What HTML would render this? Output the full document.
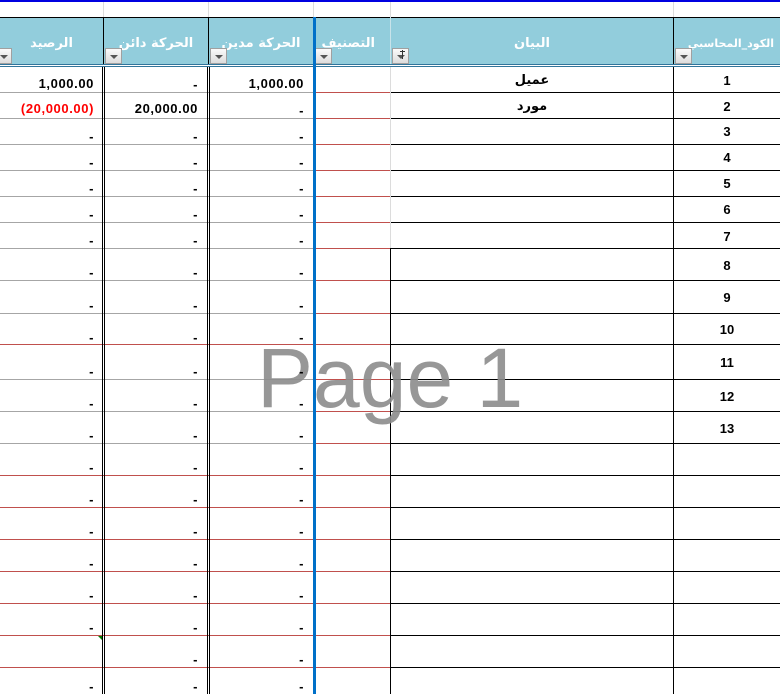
<!DOCTYPE html>
<html><head><meta charset="utf-8">
<style>
*{margin:0;padding:0;box-sizing:border-box}
body{width:780px;height:694px;overflow:hidden;background:#fff;position:relative;font-family:"Liberation Sans","DejaVu Sans",sans-serif}
.a{position:absolute}
.h{position:absolute;height:1px}
.v{position:absolute;width:1px}
.t{position:absolute;font-weight:bold;font-size:13px;line-height:16px;height:16px;color:#000;white-space:nowrap;letter-spacing:0.6px}
.c0{right:686px}.c1{right:582px}.c2{right:476px}
.hd{position:absolute;top:34px;color:#fff;font-weight:bold;font-size:13px;font-family:"DejaVu Sans",sans-serif;text-align:center;line-height:20px;white-space:nowrap}
.fb{position:absolute;top:48px;width:17px;height:16px;border:1px solid #a0a0a0;background:linear-gradient(#fafafa,#dcdcdc)}
.fb:after{content:"";position:absolute;left:4px;top:6px;border-left:4px solid transparent;border-right:4px solid transparent;border-top:4px solid #555}
.ar{font-family:"DejaVu Sans",sans-serif;letter-spacing:0}
.d .t{margin-top:3px}
.cd{position:absolute;font-weight:bold;font-size:13px;line-height:16px;left:674px;width:106px;text-align:center;margin-top:1px}
</style></head><body>
<div class="h" style="top:0;left:0;width:780px;height:2px;background:#0000e0"></div>
<div class="v" style="left:103px;top:2px;height:15px;background:#dcdcdc"></div>
<div class="v" style="left:208px;top:2px;height:15px;background:#dcdcdc"></div>
<div class="v" style="left:313px;top:2px;height:15px;background:#dcdcdc"></div>
<div class="v" style="left:390px;top:2px;height:15px;background:#dcdcdc"></div>
<div class="v" style="left:673px;top:2px;height:15px;background:#dcdcdc"></div>
<div class="a" style="left:0;top:17px;width:780px;height:48px;background:#92cddc;border-top:1px solid #000"></div>
<div class="v" style="left:103px;top:17px;height:48px;background:#000"></div>
<div class="v" style="left:208px;top:17px;height:48px;background:#000"></div>
<div class="v" style="left:390px;top:17px;height:48px;background:#c8e3ea"></div>
<div class="v" style="left:673px;top:17px;height:48px;background:#000"></div>
<div class="h" style="left:0;top:64px;width:780px;background:#31759b"></div>
<div class="h" style="left:0;top:66px;width:780px;background:#31759b"></div>
<div class="hd" style="left:0;width:103px">الرصيد</div>
<div class="hd" style="left:104px;width:104px">الحركة دائن</div>
<div class="hd" style="left:209px;width:104px">الحركة مدين</div>
<div class="hd" style="left:316px;width:74px;text-align:right;padding-right:15px">التصنيف</div>
<div class="hd" style="left:391px;width:282px">البيان</div>
<div class="hd" style="left:676px;width:98px;font-size:11px;text-align:right">الكود_المحاسبي</div>
<div class="fb" style="left:-5px"></div>
<div class="fb" style="left:105px"></div>
<div class="fb" style="left:210px"></div>
<div class="fb" style="left:315px"></div>
<div class="fb" style="left:392px"></div>
<div class="a" style="left:402px;top:50px;width:1px;height:9px;background:#333"></div>
<div class="a" style="left:400px;top:51px;width:5px;height:1px;background:#333"></div>
<div class="fb" style="left:675px"></div>

<div>
<div class="h" style="top:92px;left:0;width:313px;background:#a6a6a6"></div>
<div class="h" style="top:118px;left:0;width:313px;background:#a6a6a6"></div>
<div class="h" style="top:144px;left:0;width:313px;background:#a6a6a6"></div>
<div class="h" style="top:170px;left:0;width:313px;background:#a6a6a6"></div>
<div class="h" style="top:196px;left:0;width:313px;background:#a6a6a6"></div>
<div class="h" style="top:222px;left:0;width:313px;background:#a6a6a6"></div>
<div class="h" style="top:248px;left:0;width:313px;background:#a6a6a6"></div>
<div class="h" style="top:280px;left:0;width:313px;background:#a6a6a6"></div>
<div class="h" style="top:313px;left:0;width:313px;background:#a6a6a6"></div>
<div class="h" style="top:344px;left:0;width:313px;background:#c0504d"></div>
<div class="h" style="top:379px;left:0;width:313px;background:#a6a6a6"></div>
<div class="h" style="top:411px;left:0;width:313px;background:#a6a6a6"></div>
<div class="h" style="top:443px;left:0;width:313px;background:#a6a6a6"></div>
<div class="h" style="top:475px;left:0;width:313px;background:#c0504d"></div>
<div class="h" style="top:507px;left:0;width:313px;background:#c0504d"></div>
<div class="h" style="top:539px;left:0;width:313px;background:#c0504d"></div>
<div class="h" style="top:571px;left:0;width:313px;background:#c0504d"></div>
<div class="h" style="top:603px;left:0;width:313px;background:#c0504d"></div>
<div class="h" style="top:635px;left:0;width:313px;background:#c0504d"></div>
<div class="h" style="top:667px;left:0;width:313px;background:#c0504d"></div>
</div>
<div>
<div class="h" style="top:92px;left:315px;width:75px;background:#c0504d"></div>
<div class="h" style="top:118px;left:315px;width:75px;background:#c0504d"></div>
<div class="h" style="top:144px;left:315px;width:75px;background:#c0504d"></div>
<div class="h" style="top:170px;left:315px;width:75px;background:#c0504d"></div>
<div class="h" style="top:196px;left:315px;width:75px;background:#c0504d"></div>
<div class="h" style="top:222px;left:315px;width:75px;background:#c0504d"></div>
<div class="h" style="top:248px;left:315px;width:75px;background:#c0504d"></div>
<div class="h" style="top:280px;left:315px;width:75px;background:#c0504d"></div>
<div class="h" style="top:313px;left:315px;width:75px;background:#c0504d"></div>
<div class="h" style="top:344px;left:315px;width:75px;background:#c0504d"></div>
<div class="h" style="top:379px;left:315px;width:75px;background:#c0504d"></div>
<div class="h" style="top:411px;left:315px;width:75px;background:#c0504d"></div>
<div class="h" style="top:443px;left:315px;width:75px;background:#c0504d"></div>
<div class="h" style="top:475px;left:315px;width:75px;background:#c0504d"></div>
<div class="h" style="top:507px;left:315px;width:75px;background:#c0504d"></div>
<div class="h" style="top:539px;left:315px;width:75px;background:#c0504d"></div>
<div class="h" style="top:571px;left:315px;width:75px;background:#c0504d"></div>
<div class="h" style="top:603px;left:315px;width:75px;background:#c0504d"></div>
<div class="h" style="top:635px;left:315px;width:75px;background:#c0504d"></div>
<div class="h" style="top:667px;left:315px;width:75px;background:#c0504d"></div>
</div>
<div>
<div class="h" style="top:92px;left:390px;width:390px;background:#000"></div>
<div class="h" style="top:118px;left:390px;width:390px;background:#000"></div>
<div class="h" style="top:144px;left:390px;width:390px;background:#000"></div>
<div class="h" style="top:170px;left:390px;width:390px;background:#000"></div>
<div class="h" style="top:196px;left:390px;width:390px;background:#000"></div>
<div class="h" style="top:222px;left:390px;width:390px;background:#000"></div>
<div class="h" style="top:248px;left:390px;width:390px;background:#000"></div>
<div class="h" style="top:280px;left:390px;width:390px;background:#000"></div>
<div class="h" style="top:313px;left:390px;width:390px;background:#000"></div>
<div class="h" style="top:344px;left:390px;width:390px;background:#000"></div>
<div class="h" style="top:379px;left:390px;width:390px;background:#000"></div>
<div class="h" style="top:411px;left:390px;width:390px;background:#000"></div>
<div class="h" style="top:443px;left:390px;width:390px;background:#000"></div>
<div class="h" style="top:475px;left:390px;width:390px;background:#000"></div>
<div class="h" style="top:507px;left:390px;width:390px;background:#000"></div>
<div class="h" style="top:539px;left:390px;width:390px;background:#000"></div>
<div class="h" style="top:571px;left:390px;width:390px;background:#000"></div>
<div class="h" style="top:603px;left:390px;width:390px;background:#000"></div>
<div class="h" style="top:635px;left:390px;width:390px;background:#000"></div>
<div class="h" style="top:667px;left:390px;width:390px;background:#000"></div>
</div>
<div class="v" style="left:102px;top:67px;height:627px;background:#000"></div>
<div class="v" style="left:104px;top:67px;height:627px;background:#000"></div>
<div class="v" style="left:207px;top:67px;height:627px;background:#000"></div>
<div class="v" style="left:209px;top:67px;height:627px;background:#000"></div>
<div class="a" style="left:313px;top:17px;width:3px;height:677px;background:#0070c8"></div>
<div class="v" style="left:390px;top:67px;height:181px;background:#dcdcdc"></div>
<div class="v" style="left:390px;top:248px;height:446px;background:#000"></div>
<div class="v" style="left:673px;top:67px;height:627px;background:#000"></div>
<div class="a" style="left:98px;top:636px;width:0;height:0;border-top:4px solid #007a00;border-left:4px solid transparent"></div>

<div class="a" style="left:257px;top:336px;font-size:84px;line-height:84px;color:#8c8c8c;opacity:0.9;white-space:nowrap">Page 1</div>

<div class="t c0" style="top:76px">1,000.00</div>
<div class="t c1" style="top:77px">-</div>
<div class="t c2" style="top:76px">1,000.00</div>
<div class="t c0" style="top:101px;color:#f00">(20,000.00)</div>
<div class="t c1" style="top:101px">20,000.00</div>
<div class="t c2" style="top:103px">-</div>
<div class="t ar" style="left:391px;width:282px;text-align:center;top:73px">عميل</div>
<div class="t ar" style="left:391px;width:282px;text-align:center;top:99px">مورد</div>

<div class="d">
<div class="t c0" style="top:126px">-</div><div class="t c1" style="top:126px">-</div><div class="t c2" style="top:126px">-</div>
<div class="t c0" style="top:152px">-</div><div class="t c1" style="top:152px">-</div><div class="t c2" style="top:152px">-</div>
<div class="t c0" style="top:178px">-</div><div class="t c1" style="top:178px">-</div><div class="t c2" style="top:178px">-</div>
<div class="t c0" style="top:204px">-</div><div class="t c1" style="top:204px">-</div><div class="t c2" style="top:204px">-</div>
<div class="t c0" style="top:230px">-</div><div class="t c1" style="top:230px">-</div><div class="t c2" style="top:230px">-</div>
<div class="t c0" style="top:262px">-</div><div class="t c1" style="top:262px">-</div><div class="t c2" style="top:262px">-</div>
<div class="t c0" style="top:295px">-</div><div class="t c1" style="top:295px">-</div><div class="t c2" style="top:295px">-</div>
<div class="t c0" style="top:327px">-</div><div class="t c1" style="top:327px">-</div><div class="t c2" style="top:327px">-</div>
<div class="t c0" style="top:361px">-</div><div class="t c1" style="top:361px">-</div><div class="t c2" style="top:361px">-</div>
<div class="t c0" style="top:393px">-</div><div class="t c1" style="top:393px">-</div><div class="t c2" style="top:393px">-</div>
<div class="t c0" style="top:425px">-</div><div class="t c1" style="top:425px">-</div><div class="t c2" style="top:425px">-</div>
<div class="t c0" style="top:457px">-</div><div class="t c1" style="top:457px">-</div><div class="t c2" style="top:457px">-</div>
<div class="t c0" style="top:489px">-</div><div class="t c1" style="top:489px">-</div><div class="t c2" style="top:489px">-</div>
<div class="t c0" style="top:521px">-</div><div class="t c1" style="top:521px">-</div><div class="t c2" style="top:521px">-</div>
<div class="t c0" style="top:553px">-</div><div class="t c1" style="top:553px">-</div><div class="t c2" style="top:553px">-</div>
<div class="t c0" style="top:585px">-</div><div class="t c1" style="top:585px">-</div><div class="t c2" style="top:585px">-</div>
<div class="t c0" style="top:617px">-</div><div class="t c1" style="top:617px">-</div><div class="t c2" style="top:617px">-</div>
<div class="t c1" style="top:649px">-</div><div class="t c2" style="top:649px">-</div>
<div class="t c0" style="top:676px">-</div><div class="t c1" style="top:676px">-</div><div class="t c2" style="top:676px">-</div>
</div>

<div class="cd" style="top:72px">1</div>
<div class="cd" style="top:98px">2</div>
<div class="cd" style="top:123px">3</div>
<div class="cd" style="top:149px">4</div>
<div class="cd" style="top:175px">5</div>
<div class="cd" style="top:201px">6</div>
<div class="cd" style="top:228px">7</div>
<div class="cd" style="top:257px">8</div>
<div class="cd" style="top:289px">9</div>
<div class="cd" style="top:321px">10</div>
<div class="cd" style="top:354px">11</div>
<div class="cd" style="top:388px">12</div>
<div class="cd" style="top:420px">13</div>
</body></html>
